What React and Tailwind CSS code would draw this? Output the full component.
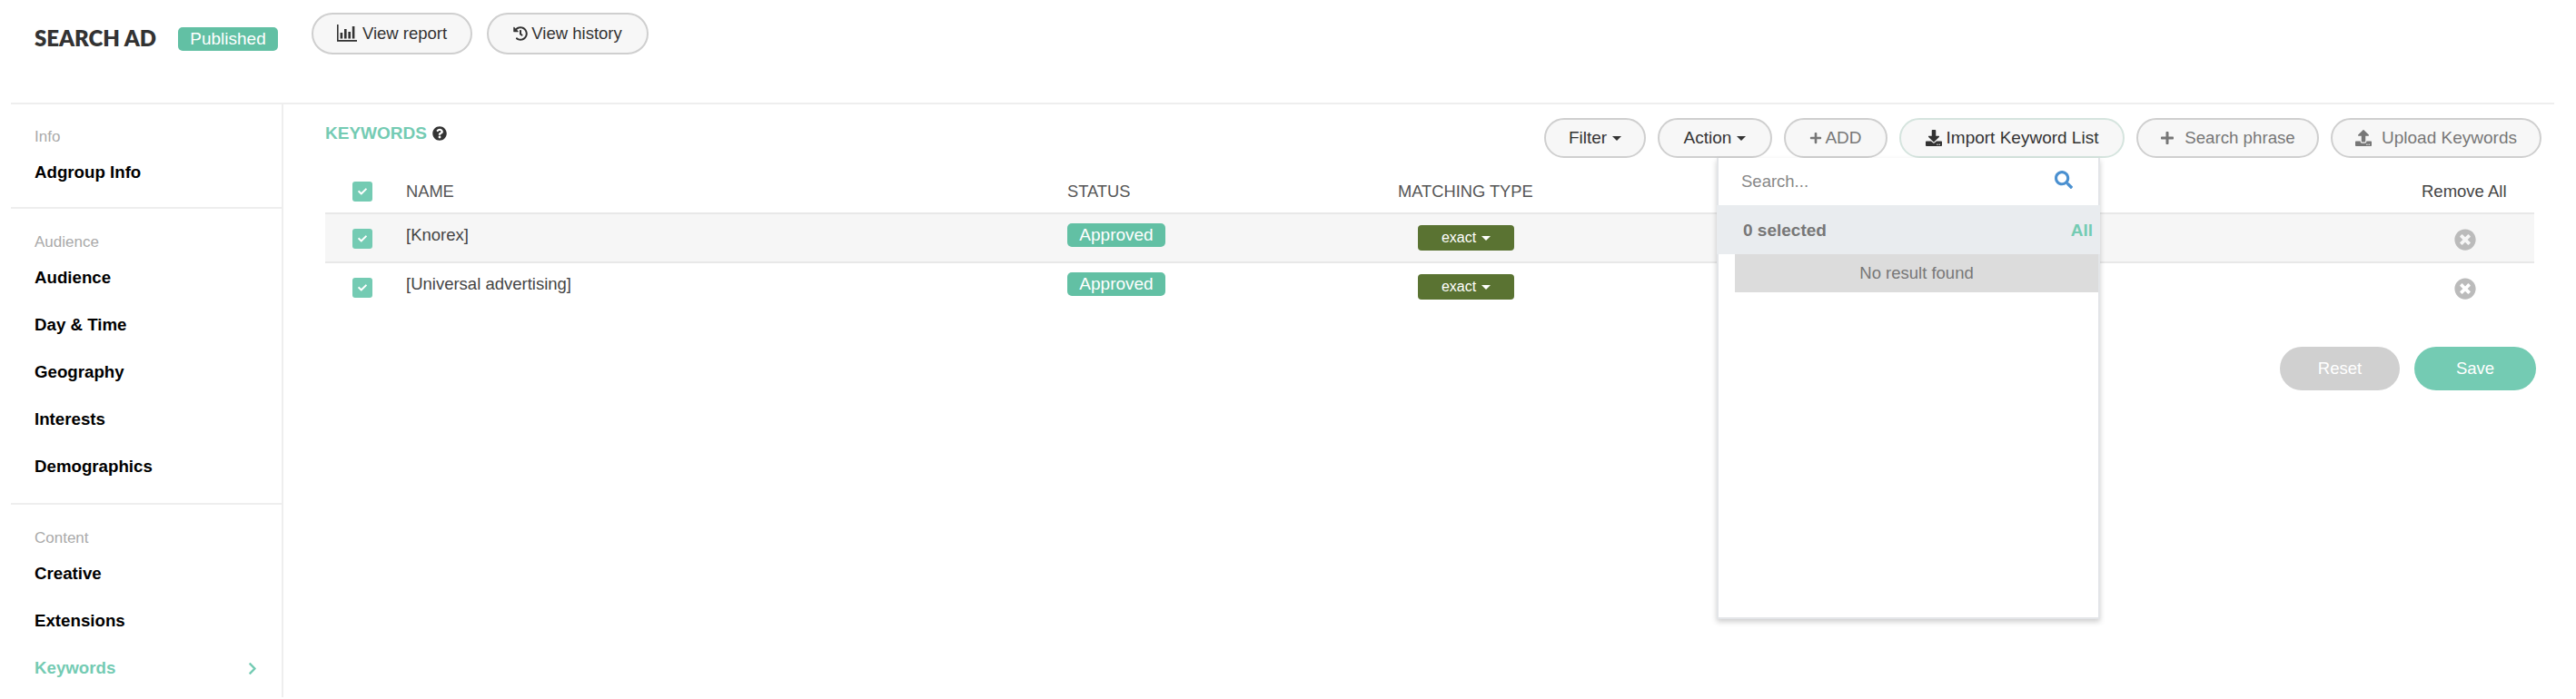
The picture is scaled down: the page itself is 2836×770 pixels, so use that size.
import React from "react";
import {
  FaCheck,
  FaChevronRight,
  FaDownload,
  FaHistory,
  FaPlus,
  FaQuestionCircle,
  FaSearch,
  FaTimesCircle,
  FaUpload,
} from "react-icons/fa";

const sans = "font-['Liberation_Sans',Arial,sans-serif]";
const tableCols = "grid grid-cols-[89px_728px_364px_1fr_124px] items-center";

function BarsIcon() {
  return (
    <svg width="22" height="20" viewBox="0 0 22 20" fill="#333">
      <rect x="0" y="0" width="1.6" height="18" />
      <rect x="0" y="17" width="22" height="1.8" />
      <rect x="3.6" y="9" width="2.6" height="6.5" />
      <rect x="8" y="5" width="2.6" height="10.5" />
      <rect x="12.4" y="8" width="2.6" height="7.5" />
      <rect x="16.8" y="2" width="2.6" height="13.5" />
    </svg>
  );
}

function Caret() {
  return <span className="inline-block w-0 h-0 ml-[6px] align-middle border-x-[5px] border-x-transparent border-t-[5px] border-t-current" />;
}

function PillButton({ className, children }) {
  return (
    <button className={`flex items-center justify-center h-[44px] rounded-full border-2 border-[#cfcfcf] bg-[#f7f7f7] ${className}`}>
      {children}
    </button>
  );
}

function SideItem({ children, active }) {
  return (
    <div className={`flex items-center justify-between h-[52px] pr-[26px] text-[18.7px] font-bold ${active ? "text-[#74cbb3]" : "text-black"}`}>
      {children}
      {active && <FaChevronRight className="w-[12px] h-[15px]" />}
    </div>
  );
}

function SideLabel({ children }) {
  return <div className="h-[20px] flex items-center text-[17px] text-[#aaaaaa]">{children}</div>;
}

function Checkbox({ className }) {
  return (
    <span className={`flex items-center justify-center w-[22px] h-[22px] rounded-[3px] bg-[#74cbb3] text-white ${className || ""}`}>
      <FaCheck className="w-[10px] h-[10px]" />
    </span>
  );
}

function KeywordRow({ name, shaded }) {
  return (
    <div className={`${tableCols} text-[18.5px] text-[#444] ${shaded ? "h-[56px] bg-[#f6f6f6] border-y-2 border-[#e8e8e8]" : "h-[52px]"}`}>
      <span className="pl-[30px]"><Checkbox className="mt-[2px]" /></span>
      <span className="mb-[6px]">{name}</span>
      <span className="mb-[6px]">
        <span className="flex items-center justify-center w-[108px] h-[26px] rounded-[5px] bg-[#62c0a4] text-[19px] text-white">Approved</span>
      </span>
      <span className="pl-[22px]">
        <span className="flex items-center justify-center w-[106px] h-[28px] rounded-[4px] bg-[#5a7332] text-[16px] text-white">exact<Caret /></span>
      </span>
      <span className="pl-[36px]">
        <FaTimesCircle className="w-[24px] h-[24px] mt-[3px] text-[#bbbbbb]" />
      </span>
    </div>
  );
}

export default function App() {
  return (
    <div className={`${sans} relative h-[770px] bg-white overflow-hidden`}>
      <header className="flex items-start h-[113px] pl-[38px]">
        <h1 className="mt-[27px] font-['Lato',sans-serif] font-extrabold text-[24px] leading-[30px] text-[#333]">SEARCH AD</h1>
        <span className="flex items-center justify-center mt-[30px] ml-[24px] w-[110px] h-[26px] rounded-[5px] bg-[#62c0a4] text-[19px] text-white">Published</span>
        <div className="flex gap-[16px] mt-[14px] ml-[37px] text-[#333]">
          <PillButton className="w-[177px] h-[46px] text-[18.5px]"><BarsIcon /><span className="ml-[6px]">View report</span></PillButton>
          <PillButton className="w-[178px] h-[46px] text-[18.5px]"><FaHistory className="w-[16px] h-[16px] mr-[4px]" />View history</PillButton>
        </div>
      </header>

      <div className="flex ml-[12px] mr-[24px] border-t-2 border-[#eeeeee] h-[655px]">
        <aside className="w-[300px] shrink-0 border-r-2 border-[#eeeeee] pt-[26px]">
          <div className="pb-[12px] border-b-2 border-[#eeeeee] pl-[26px]">
            <SideLabel>Info</SideLabel>
            <div className="mt-[3px]"><SideItem>Adgroup Info</SideItem></div>
          </div>
          <div className="pt-[27px] pb-[14px] pl-[26px] border-b-2 border-[#eeeeee]">
            <SideLabel>Audience</SideLabel>
            <div className="mt-[3px]">
              <SideItem>Audience</SideItem>
              <SideItem>Day &amp; Time</SideItem>
              <SideItem>Geography</SideItem>
              <SideItem>Interests</SideItem>
              <SideItem>Demographics</SideItem>
            </div>
          </div>
          <div className="pt-[27px] pl-[26px]">
            <SideLabel>Content</SideLabel>
            <div className="mt-[3px]">
              <SideItem>Creative</SideItem>
              <SideItem>Extensions</SideItem>
              <SideItem active>Keywords</SideItem>
            </div>
          </div>
        </aside>

        <main className="flex-1 pl-[46px] pr-[14px]">
          <div className="flex items-start justify-between h-[73px] pt-[15px]">
            <div className="flex items-center h-[36px] pb-[2px] text-[19px] font-bold text-[#74cbb3]">
              KEYWORDS
              <FaQuestionCircle className="ml-[6px] w-[16px] h-[16px] text-[#333]" />
            </div>
            <div className="flex gap-[13px] text-[#333] text-[19px]">
              <PillButton className="w-[112px]">Filter<Caret /></PillButton>
              <PillButton className="w-[126px]">Action<Caret /></PillButton>
              <PillButton className="w-[114px] text-[#777]"><FaPlus className="w-[14px] h-[14px] mr-[3px]" />ADD</PillButton>
              <PillButton className="w-[248px] bg-[#f5fffb] border-[#d5e4de]"><FaDownload className="w-[18px] h-[18px] mr-[5px]" />Import Keyword List</PillButton>
              <PillButton className="w-[201px] text-[#777] text-[18.7px]"><FaPlus className="w-[16px] h-[16px] mr-[11px]" />Search phrase</PillButton>
              <PillButton className="w-[232px] text-[#777]"><FaUpload className="w-[18px] h-[18px] mr-[11px]" />Upload Keywords</PillButton>
            </div>
          </div>

          <div className="mr-[8px]">
            <div className={`${tableCols} h-[46px] text-[18.3px] text-[#555]`}>
              <span className="pl-[30px]"><Checkbox /></span>
              <span>NAME</span>
              <span>STATUS</span>
              <span>MATCHING TYPE</span>
              <span className="text-[18.5px] text-[#444]">Remove All</span>
            </div>
            <KeywordRow name="[Knorex]" shaded />
            <KeywordRow name="[Universal advertising]" />
          </div>

          <div className="flex justify-end gap-[16px] mt-[40px] mr-[6px]">
            <button className="w-[132px] h-[48px] rounded-full bg-[#d0d0d0] text-[18.5px] text-white">Reset</button>
            <button className="w-[134px] h-[48px] rounded-full bg-[#74cbb3] text-[18.5px] text-white">Save</button>
          </div>
        </main>
      </div>

      {/* open keyword search menu */}
      <div className="absolute left-[1890px] top-[174px] w-[422px] h-[508px] bg-white border-x-2 border-b-2 border-[#e3e5e8] shadow-[0_3px_6px_rgba(0,0,0,0.2)]">
        <div className="flex items-center justify-between h-[52px] pl-[25px] pr-[28px] text-[18.5px] text-[#888]">
          Search...
          <FaSearch className="w-[20px] h-[20px] mb-[4px] text-[#4a90d0]" />
        </div>
        <div className="flex items-center justify-between h-[54px] -mx-[2px] pl-[29px] pr-[8px] pt-[2px] bg-[#e9ecef] text-[19px] font-bold text-[#777]">
          0 selected
          <span className="text-[#74cbb3]">All</span>
        </div>
        <div className="flex items-center justify-center h-[42px] ml-[18px] text-[18.5px] text-[#777] bg-[#dcdcdc]">No result found</div>
      </div>
    </div>
  );
}
